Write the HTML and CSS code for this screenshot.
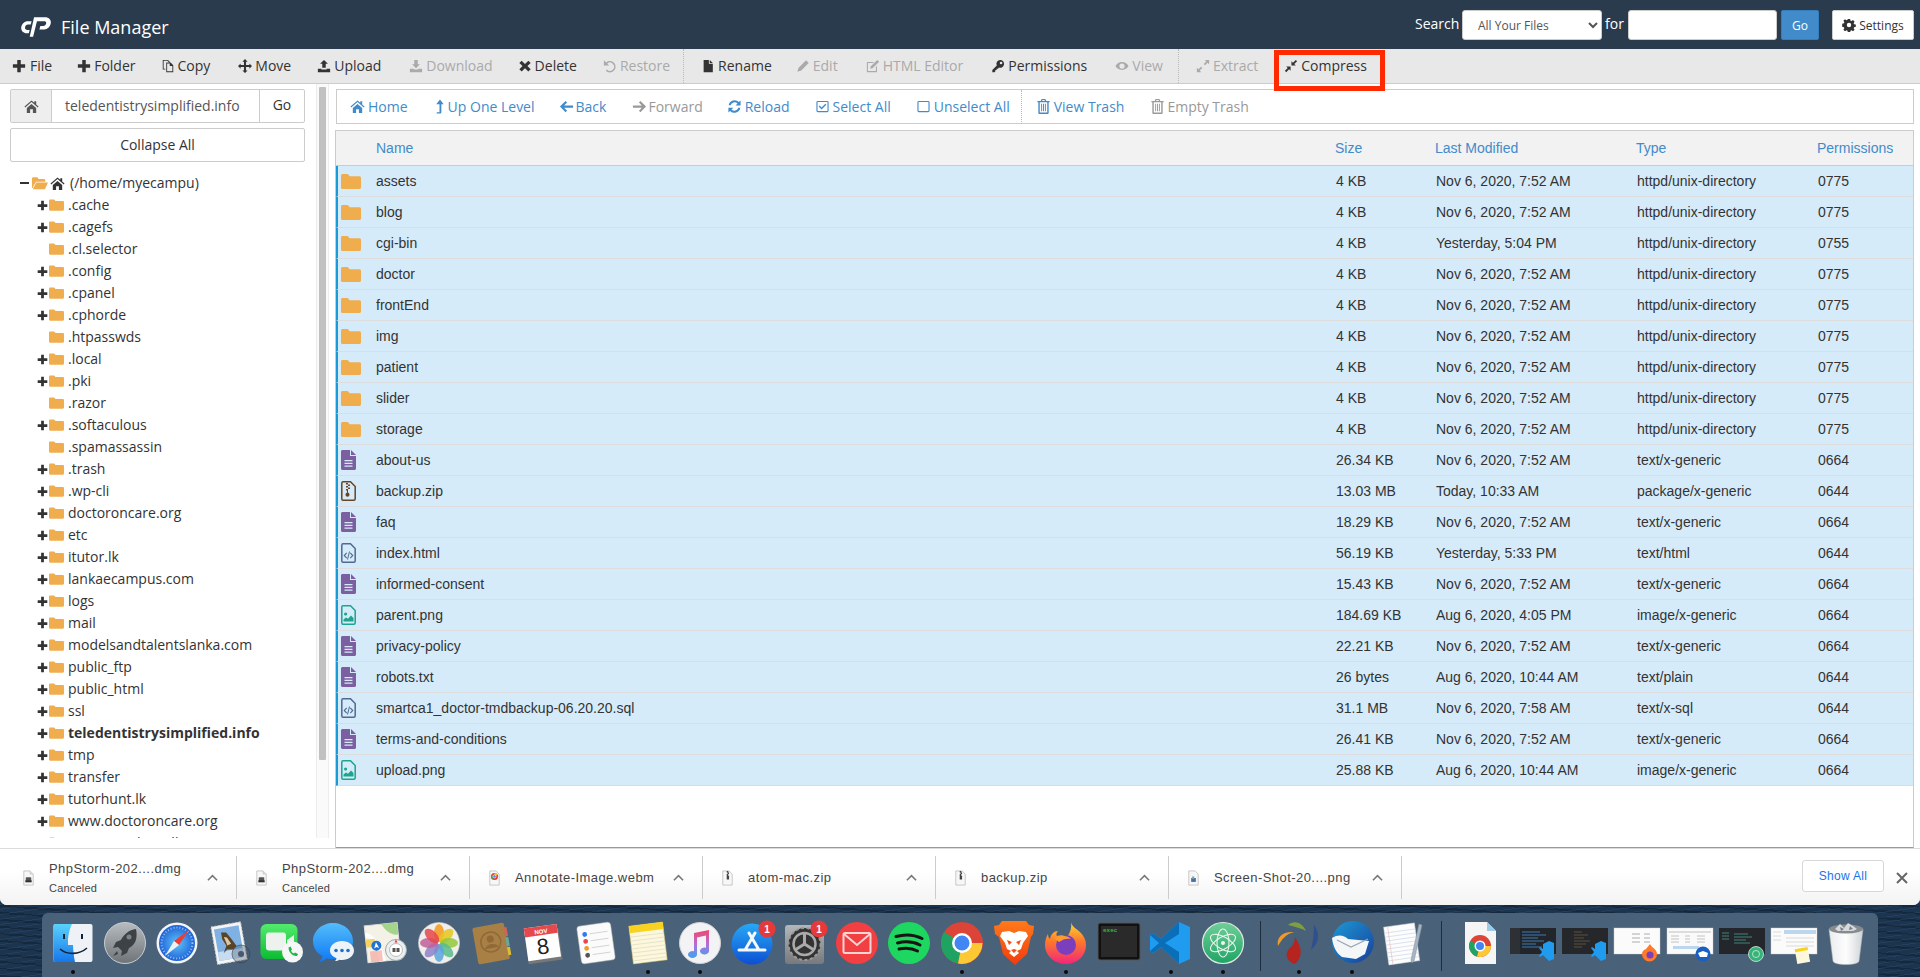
FILE: index.html
```html
<!DOCTYPE html>
<html lang="en">
<head>
<meta charset="utf-8">
<title>File Manager</title>
<link rel="stylesheet" href="styles.css">
</head>
<body>
<svg class="sprite" aria-hidden="true">
  <symbol id="i-plus" viewBox="0 0 16 16"><path d="M6 1h4v5h5v4h-5v5H6v-5H1V6h5z"/></symbol>
  <symbol id="i-copy" viewBox="0 0 16 16"><path fill-rule="evenodd" d="M2 1h6l2 2v1H9V3.6L7.5 2H3v9h2v1H2zM6 4h5l3 3v8H6zM7 5v9h6V8h-3V5z"/></symbol>
  <symbol id="i-move" viewBox="0 0 16 16"><path d="M8 0l3 3H9.2v3.8H13V5l3 3-3 3V9.2H9.2V13H11l-3 3-3-3h1.8V9.2H3V11L0 8l3-3v1.8h3.8V3H5z"/></symbol>
  <symbol id="i-upload" viewBox="0 0 16 16"><path d="M8 1l4.5 4.5H10V10H6V5.5H3.5zM1 11h4v1h6v-1h4v4H1z"/></symbol>
  <symbol id="i-download" viewBox="0 0 16 16"><path d="M6 1h4v5h2.5L8 10.5 3.5 6H6zM1 11h4l1 1h4l1-1h4v4H1z"/></symbol>
  <symbol id="i-x" viewBox="0 0 16 16"><path d="M4.2 2L8 5.6 11.8 2 14.5 4.6 10.8 8l3.7 3.6-2.7 2.6L8 10.6l-3.8 3.6-2.700-2.600L5.2 8 1.500 4.600z"/></symbol>
  <symbol id="i-undo" viewBox="0 0 16 16"><path d="M1 1.500v6h6L4.800 5.300A4.700 4.700 0 1 1 4.500 12l-1.300 1.300A6.500 6.500 0 1 0 3.500 4z"/></symbol>
  <symbol id="i-file" viewBox="0 0 16 16"><path d="M3 1h6v4.500h4.500V15H3zM10 1l3.500 3.500H10z"/></symbol>
  <symbol id="i-pencil" viewBox="0 0 16 16"><path d="M11.500 1.500l3 3L6 13l-4.500 1.500L3 10z"/></symbol>
  <symbol id="i-pensq" viewBox="0 0 16 16"><path fill-rule="evenodd" d="M1 3.500h8L8 4.700H2.200v9.100h9.100V9l1.200-1.200V15H1z"/><path d="M12.800 1l2.200 2.200L7.500 10.700 5 11l.3-2.500z"/></symbol>
  <symbol id="i-key" viewBox="0 0 16 16"><path fill-rule="evenodd" d="M10.500 1a4.500 4.500 0 1 1-1.400 8.800L8 11H6.500v1.500H5V14l-1 1H1.500v-2.500l5.100-5.100A4.500 4.500 0 0 1 10.500 1zM11.500 3a1.500 1.500 0 1 0 0 3 1.500 1.500 0 0 0 0-3z"/></symbol>
  <symbol id="i-eye" viewBox="0 0 16 16"><path fill-rule="evenodd" d="M8 3.500c3.500 0 6.200 2.300 7.500 4.500-1.300 2.200-4 4.500-7.500 4.500S1.800 10.200.5 8C1.800 5.800 4.500 3.500 8 3.500zM8 5a3 3 0 1 0 0 6 3 3 0 0 0 0-6z"/></symbol>
  <symbol id="i-expand" viewBox="0 0 16 16"><path d="M10 1h5v5l-1.800-1.800-3 3-1.400-1.400 3-3zM6 15H1v-5l1.800 1.800 3-3 1.400 1.400-3 3z"/></symbol>
  <symbol id="i-compress" viewBox="0 0 16 16"><path d="M15 2.500L11.700 5.800 13.500 7.500H8.500V2.500l1.700 1.800L13.500 1zM1 13.500l3.300-3.300L2.500 8.500h5v5l-1.700-1.800L2.500 15z"/></symbol>
  <symbol id="i-home" viewBox="0 0 16 16"><path d="M8 1.500l3 2.600V2.500h2v3.300l2.500 2.200-.8 1L8 3.300 1.300 9l-.8-1zM3 9.500l5-4.200 5 4.200V15H9.500v-4h-3v4H3z"/></symbol>
  <symbol id="i-up" viewBox="0 0 16 16"><path d="M8.500.5l4 5H10V14c0 .8-.6 1.500-1.500 1.500H5V14h3V5.500H4.500z"/></symbol>
  <symbol id="i-left" viewBox="0 0 16 16"><path d="M7 2l1.600 1.600-3.100 3.200H15v2.400H5.500l3.100 3.200L7 14 1 8z"/></symbol>
  <symbol id="i-right" viewBox="0 0 16 16"><path d="M9 2L7.400 3.600l3.100 3.200H1v2.400h9.500l-3.100 3.200L9 14l6-6z"/></symbol>
  <symbol id="i-reload" viewBox="0 0 16 16"><path d="M14.500 1.500v5.300H9.200l2-2A4.400 4.400 0 0 0 3.900 6.700H1.800A6.400 6.400 0 0 1 12.700 3.300zM1.500 14.500V9.200h5.300l-2 2a4.400 4.400 0 0 0 7.300-1.900h2.100A6.400 6.400 0 0 1 3.300 12.700z"/></symbol>
  <symbol id="i-check" viewBox="0 0 16 16"><path fill-rule="evenodd" d="M3 2h10a1.500 1.500 0 0 1 1.500 1.500v9A1.500 1.500 0 0 1 13 14H3a1.500 1.500 0 0 1-1.500-1.500v-9A1.500 1.500 0 0 1 3 2zm0 1.200a.4.400 0 0 0-.3.300v9c0 .2.100.3.300.3h10c.2 0 .3-.1.300-.3v-9a.4.400 0 0 0-.3-.3z"/><path d="M7 11.200L3.900 8.100l1.100-1.100 2 2 4-4 1.100 1.100z"/></symbol>
  <symbol id="i-square" viewBox="0 0 16 16"><path fill-rule="evenodd" d="M3 2h10a1.500 1.500 0 0 1 1.500 1.500v9A1.500 1.500 0 0 1 13 14H3a1.500 1.500 0 0 1-1.500-1.500v-9A1.500 1.500 0 0 1 3 2zm0 1.200a.4.400 0 0 0-.3.300v9c0 .2.100.3.300.3h10c.2 0 .3-.1.300-.3v-9a.4.400 0 0 0-.3-.3z"/></symbol>
  <symbol id="i-trash" viewBox="0 0 16 16"><path fill-rule="evenodd" d="M6 0h4l1 2h3.500v1.500h-1V15a1 1 0 0 1-1 1h-9a1 1 0 0 1-1-1V3.500h-1V2H5zM7 1L6.500 2h3L9 1zM4 3.500v11h8v-11z"/><path d="M5.500 5h1v8h-1zM7.500 5h1v8h-1zM9.500 5h1v8h-1z"/></symbol>
  <symbol id="i-gear" viewBox="0 0 16 16"><path fill-rule="evenodd" d="M6.700 1h2.600l.4 2 1.200.5 1.700-1.100 1.800 1.800-1.100 1.700.5 1.200 2 .4v2.600l-2 .4-.5 1.200 1.100 1.700-1.800 1.800-1.700-1.100-1.200.5-.4 2H6.700l-.4-2-1.200-.5-1.700 1.100-1.800-1.800 1.100-1.700-.5-1.200-2-.4V6.500l2-.4.500-1.200L1.600 3.200l1.800-1.800 1.700 1.100 1.200-.5zM8 5.500a2.500 2.500 0 1 0 0 5 2.500 2.500 0 0 0 0-5z"/></symbol>
  <symbol id="i-folder" viewBox="0 0 20 15"><path d="M0 1.500C0 .7.700 0 1.500 0h5.200l2 2.200h9.800c.8 0 1.500.7 1.500 1.500v9.800c0 .8-.7 1.500-1.500 1.500h-17C.7 15 0 14.300 0 13.500z"/></symbol>
  <symbol id="i-folderopen" viewBox="0 0 18 14"><path d="M0 1.500C0 .7.700 0 1.500 0H6l1.500 2h6c.8 0 1.500.7 1.500 1.500V5H4.500L1 11V12L0 12z"/><path d="M4.800 6H18l-3.500 7.500H.8z"/></symbol>
  <symbol id="i-doc" viewBox="0 0 15 20"><path fill-rule="evenodd" d="M1.500 0H9v6h6v12.500c0 .8-.7 1.500-1.500 1.500h-12C.7 20 0 19.300 0 18.500v-17C0 .7.700 0 1.500 0zM3.500 10v1.300h8V10zM3.500 12.700V14h8v-1.300zM3.500 15.400v1.300h8v-1.300z"/><path d="M10 0l5 5h-5z"/></symbol>
  <symbol id="i-zip" viewBox="0 0 15 20"><path fill="none" stroke="currentColor" stroke-width="1.500" d="M2 .8h7.500l4.700 4.700v12.200c0 .8-.6 1.500-1.400 1.500H2c-.7 0-1.200-.7-1.200-1.500V2.300C.8 1.500 1.300.8 2 .8z"/><path d="M5 2h2v1.500H5zM7 3.500h2V5H7zM5 5h2v1.500H5zM7 6.500h2V8H7zM5 8h2v1.500H5zM7 9.500v2c1 .5 1.500 1.300 1.500 2.200a2 2 0 0 1-4 0c0-.9.500-1.700 1.500-2.200v-2z"/></symbol>
  <symbol id="i-code" viewBox="0 0 15 20"><path fill="none" stroke="currentColor" stroke-width="1.500" d="M2 .8h7.500l4.700 4.700v12.200c0 .8-.6 1.500-1.400 1.500H2c-.7 0-1.200-.7-1.200-1.500V2.300C.8 1.500 1.300.8 2 .8z"/><path d="M5.300 9.500l.8.800-2 2.200 2 2.200-.8.800-2.800-3zM9.700 9.500l-.8.800 2 2.200-2 2.200.8.800 2.800-3zM8 8.500h1l-2 8H6z"/></symbol>
  <symbol id="i-image" viewBox="0 0 15 20"><path fill="none" stroke="currentColor" stroke-width="1.500" d="M2 .8h7.500l4.700 4.700v12.200c0 .8-.6 1.500-1.400 1.500H2c-.7 0-1.200-.7-1.200-1.500V2.300C.8 1.500 1.300.8 2 .8z"/><circle cx="4.600" cy="9" r="1.600"/><path d="M2.500 16.500v-2l2.500-2 2 1.300 3-3.300 2.500 2.500v3.500z"/></symbol>
  <symbol id="i-chev" viewBox="0 0 12 8"><path fill="none" stroke="currentColor" stroke-width="1.700" d="M1 6.500L6 1.500l5 5"/></symbol>
</svg>

<div class="window">
  <header class="topbar">
    <div class="brand">
      <svg class="logo" viewBox="0 0 31 20"><path d="M9 20h3.500L16.500 4H24c1.500 0 2.400 1 2 2.500-.4 1.500-1.500 2.500-3 2.500h-3l-1 3.500h5c3.500 0 6-2.500 6.700-6C31.500 3 29 0 25 0H13.500z"/><path d="M11 4H7C3.500 4 1 6.500.3 10-.3 13.500 2 16.500 6 16.500h2l1-3.500H6.500c-1.600 0-2.600-1.200-2.300-2.800C4.500 8.700 5.700 7.500 7.200 7.500H10z"/></svg>
      <span class="brand-name">File Manager</span>
    </div>
    <form class="search">
      <label class="search-label">Search</label>
      <select class="search-select"><option>All Your Files</option></select>
      <label class="search-for">for</label>
      <input class="search-input" type="text">
      <button class="btn-go" type="button">Go</button>
      <button class="btn-settings" type="button"><svg class="ic ic-s"><use href="#i-gear"/></svg>Settings</button>
    </form>
  </header>

  <nav class="toolbar">
    <span class="tool t-file"><svg class="ic"><use href="#i-plus"/></svg>File</span>
    <span class="tool t-folder"><svg class="ic"><use href="#i-plus"/></svg>Folder</span>
    <span class="tool t-copy"><svg class="ic"><use href="#i-copy"/></svg>Copy</span>
    <span class="tool t-move"><svg class="ic"><use href="#i-move"/></svg>Move</span>
    <span class="tool t-upload"><svg class="ic"><use href="#i-upload"/></svg>Upload</span>
    <span class="tool off t-download"><svg class="ic"><use href="#i-download"/></svg>Download</span>
    <span class="tool t-delete"><svg class="ic"><use href="#i-x"/></svg>Delete</span>
    <span class="tool off t-restore"><svg class="ic"><use href="#i-undo"/></svg>Restore</span>
    <span class="vsep"></span>
    <span class="tool t-rename"><svg class="ic"><use href="#i-file"/></svg>Rename</span>
    <span class="tool off t-edit"><svg class="ic"><use href="#i-pencil"/></svg>Edit</span>
    <span class="tool off t-html"><svg class="ic"><use href="#i-pensq"/></svg>HTML Editor</span>
    <span class="tool t-perm"><svg class="ic"><use href="#i-key"/></svg>Permissions</span>
    <span class="tool off t-view"><svg class="ic"><use href="#i-eye"/></svg>View</span>
    <span class="vsep"></span>
    <span class="tool off t-extract"><svg class="ic"><use href="#i-expand"/></svg>Extract</span>
    <span class="tool compress"><svg class="ic"><use href="#i-compress"/></svg>Compress</span>
  </nav>

  <main class="main">
    <aside class="side">
      <div class="side-body">
        <div class="pathbar">
          <span class="path-home"><svg class="ic-home"><use href="#i-home"/></svg></span>
          <span class="path-input">teledentistrysimplified.info</span>
          <span class="path-go">Go</span>
        </div>
        <div class="collapse">Collapse All</div>
        <ul class="tree">
          <li class="node root"><span class="minus"></span><svg class="f-open"><use href="#i-folderopen"/></svg><svg class="root-home"><use href="#i-home"/></svg>(/home/myecampu)</li>
          <li class="node"><svg class="tg"><use href="#i-plus"/></svg><svg class="f"><use href="#i-folder"/></svg>.cache</li>
          <li class="node"><svg class="tg"><use href="#i-plus"/></svg><svg class="f"><use href="#i-folder"/></svg>.cagefs</li>
          <li class="node leaf"><svg class="f"><use href="#i-folder"/></svg>.cl.selector</li>
          <li class="node"><svg class="tg"><use href="#i-plus"/></svg><svg class="f"><use href="#i-folder"/></svg>.config</li>
          <li class="node"><svg class="tg"><use href="#i-plus"/></svg><svg class="f"><use href="#i-folder"/></svg>.cpanel</li>
          <li class="node"><svg class="tg"><use href="#i-plus"/></svg><svg class="f"><use href="#i-folder"/></svg>.cphorde</li>
          <li class="node leaf"><svg class="f"><use href="#i-folder"/></svg>.htpasswds</li>
          <li class="node"><svg class="tg"><use href="#i-plus"/></svg><svg class="f"><use href="#i-folder"/></svg>.local</li>
          <li class="node"><svg class="tg"><use href="#i-plus"/></svg><svg class="f"><use href="#i-folder"/></svg>.pki</li>
          <li class="node leaf"><svg class="f"><use href="#i-folder"/></svg>.razor</li>
          <li class="node"><svg class="tg"><use href="#i-plus"/></svg><svg class="f"><use href="#i-folder"/></svg>.softaculous</li>
          <li class="node leaf"><svg class="f"><use href="#i-folder"/></svg>.spamassassin</li>
          <li class="node"><svg class="tg"><use href="#i-plus"/></svg><svg class="f"><use href="#i-folder"/></svg>.trash</li>
          <li class="node"><svg class="tg"><use href="#i-plus"/></svg><svg class="f"><use href="#i-folder"/></svg>.wp-cli</li>
          <li class="node"><svg class="tg"><use href="#i-plus"/></svg><svg class="f"><use href="#i-folder"/></svg>doctoroncare.org</li>
          <li class="node"><svg class="tg"><use href="#i-plus"/></svg><svg class="f"><use href="#i-folder"/></svg>etc</li>
          <li class="node"><svg class="tg"><use href="#i-plus"/></svg><svg class="f"><use href="#i-folder"/></svg>itutor.lk</li>
          <li class="node"><svg class="tg"><use href="#i-plus"/></svg><svg class="f"><use href="#i-folder"/></svg>lankaecampus.com</li>
          <li class="node"><svg class="tg"><use href="#i-plus"/></svg><svg class="f"><use href="#i-folder"/></svg>logs</li>
          <li class="node"><svg class="tg"><use href="#i-plus"/></svg><svg class="f"><use href="#i-folder"/></svg>mail</li>
          <li class="node"><svg class="tg"><use href="#i-plus"/></svg><svg class="f"><use href="#i-folder"/></svg>modelsandtalentslanka.com</li>
          <li class="node"><svg class="tg"><use href="#i-plus"/></svg><svg class="f"><use href="#i-folder"/></svg>public_ftp</li>
          <li class="node"><svg class="tg"><use href="#i-plus"/></svg><svg class="f"><use href="#i-folder"/></svg>public_html</li>
          <li class="node"><svg class="tg"><use href="#i-plus"/></svg><svg class="f"><use href="#i-folder"/></svg>ssl</li>
          <li class="node current"><svg class="tg"><use href="#i-plus"/></svg><svg class="f"><use href="#i-folder"/></svg>teledentistrysimplified.info</li>
          <li class="node"><svg class="tg"><use href="#i-plus"/></svg><svg class="f"><use href="#i-folder"/></svg>tmp</li>
          <li class="node"><svg class="tg"><use href="#i-plus"/></svg><svg class="f"><use href="#i-folder"/></svg>transfer</li>
          <li class="node"><svg class="tg"><use href="#i-plus"/></svg><svg class="f"><use href="#i-folder"/></svg>tutorhunt.lk</li>
          <li class="node"><svg class="tg"><use href="#i-plus"/></svg><svg class="f"><use href="#i-folder"/></svg>www.doctoroncare.org</li>
          <li class="node"><svg class="tg"><use href="#i-plus"/></svg><svg class="f"><use href="#i-folder"/></svg>www.tutorhunt.lk</li>
        </ul>
      </div>
      <div class="scrollbar"><div class="thumb"></div></div>
    </aside>

    <section class="content">
      <div class="actions">
        <span class="act a-home"><svg class="ic"><use href="#i-home"/></svg>Home</span>
        <span class="act a-up"><svg class="ic"><use href="#i-up"/></svg>Up One Level</span>
        <span class="act a-back"><svg class="ic"><use href="#i-left"/></svg>Back</span>
        <span class="act off a-forward"><svg class="ic"><use href="#i-right"/></svg>Forward</span>
        <span class="act a-reload"><svg class="ic"><use href="#i-reload"/></svg>Reload</span>
        <span class="act a-select"><svg class="ic"><use href="#i-check"/></svg>Select All</span>
        <span class="act a-unselect"><svg class="ic"><use href="#i-square"/></svg>Unselect All</span>
        <span class="vsep vsep-act"></span>
        <span class="act a-trash"><svg class="ic"><use href="#i-trash"/></svg>View Trash</span>
        <span class="act off a-empty"><svg class="ic"><use href="#i-trash"/></svg>Empty Trash</span>
      </div>
      <div class="listing">
        <table class="files">
          <colgroup><col class="c-icon"><col class="c-name"><col class="c-size"><col class="c-mod"><col class="c-type"><col class="c-perm"></colgroup>
          <thead><tr><th></th><th>Name</th><th>Size</th><th>Last Modified</th><th>Type</th><th>Permissions</th></tr></thead>
          <tbody>
            <tr><td class="cell-ic"><svg class="k-folder"><use href="#i-folder"/></svg></td><td>assets</td><td>4 KB</td><td>Nov 6, 2020, 7:52 AM</td><td>httpd/unix-directory</td><td>0775</td></tr>
            <tr><td class="cell-ic"><svg class="k-folder"><use href="#i-folder"/></svg></td><td>blog</td><td>4 KB</td><td>Nov 6, 2020, 7:52 AM</td><td>httpd/unix-directory</td><td>0775</td></tr>
            <tr><td class="cell-ic"><svg class="k-folder"><use href="#i-folder"/></svg></td><td>cgi-bin</td><td>4 KB</td><td>Yesterday, 5:04 PM</td><td>httpd/unix-directory</td><td>0755</td></tr>
            <tr><td class="cell-ic"><svg class="k-folder"><use href="#i-folder"/></svg></td><td>doctor</td><td>4 KB</td><td>Nov 6, 2020, 7:52 AM</td><td>httpd/unix-directory</td><td>0775</td></tr>
            <tr><td class="cell-ic"><svg class="k-folder"><use href="#i-folder"/></svg></td><td>frontEnd</td><td>4 KB</td><td>Nov 6, 2020, 7:52 AM</td><td>httpd/unix-directory</td><td>0775</td></tr>
            <tr><td class="cell-ic"><svg class="k-folder"><use href="#i-folder"/></svg></td><td>img</td><td>4 KB</td><td>Nov 6, 2020, 7:52 AM</td><td>httpd/unix-directory</td><td>0775</td></tr>
            <tr><td class="cell-ic"><svg class="k-folder"><use href="#i-folder"/></svg></td><td>patient</td><td>4 KB</td><td>Nov 6, 2020, 7:52 AM</td><td>httpd/unix-directory</td><td>0775</td></tr>
            <tr><td class="cell-ic"><svg class="k-folder"><use href="#i-folder"/></svg></td><td>slider</td><td>4 KB</td><td>Nov 6, 2020, 7:52 AM</td><td>httpd/unix-directory</td><td>0775</td></tr>
            <tr><td class="cell-ic"><svg class="k-folder"><use href="#i-folder"/></svg></td><td>storage</td><td>4 KB</td><td>Nov 6, 2020, 7:52 AM</td><td>httpd/unix-directory</td><td>0775</td></tr>
            <tr><td class="cell-ic"><svg class="k-doc"><use href="#i-doc"/></svg></td><td>about-us</td><td>26.34 KB</td><td>Nov 6, 2020, 7:52 AM</td><td>text/x-generic</td><td>0664</td></tr>
            <tr><td class="cell-ic"><svg class="k-zip"><use href="#i-zip"/></svg></td><td>backup.zip</td><td>13.03 MB</td><td>Today, 10:33 AM</td><td>package/x-generic</td><td>0644</td></tr>
            <tr><td class="cell-ic"><svg class="k-doc"><use href="#i-doc"/></svg></td><td>faq</td><td>18.29 KB</td><td>Nov 6, 2020, 7:52 AM</td><td>text/x-generic</td><td>0664</td></tr>
            <tr><td class="cell-ic"><svg class="k-code"><use href="#i-code"/></svg></td><td>index.html</td><td>56.19 KB</td><td>Yesterday, 5:33 PM</td><td>text/html</td><td>0644</td></tr>
            <tr><td class="cell-ic"><svg class="k-doc"><use href="#i-doc"/></svg></td><td>informed-consent</td><td>15.43 KB</td><td>Nov 6, 2020, 7:52 AM</td><td>text/x-generic</td><td>0664</td></tr>
            <tr><td class="cell-ic"><svg class="k-image"><use href="#i-image"/></svg></td><td>parent.png</td><td>184.69 KB</td><td>Aug 6, 2020, 4:05 PM</td><td>image/x-generic</td><td>0664</td></tr>
            <tr><td class="cell-ic"><svg class="k-doc"><use href="#i-doc"/></svg></td><td>privacy-policy</td><td>22.21 KB</td><td>Nov 6, 2020, 7:52 AM</td><td>text/x-generic</td><td>0664</td></tr>
            <tr><td class="cell-ic"><svg class="k-doc"><use href="#i-doc"/></svg></td><td>robots.txt</td><td>26 bytes</td><td>Aug 6, 2020, 10:44 AM</td><td>text/plain</td><td>0644</td></tr>
            <tr><td class="cell-ic"><svg class="k-code"><use href="#i-code"/></svg></td><td>smartca1_doctor-tmdbackup-06.20.20.sql</td><td>31.1 MB</td><td>Nov 6, 2020, 7:58 AM</td><td>text/x-sql</td><td>0644</td></tr>
            <tr><td class="cell-ic"><svg class="k-doc"><use href="#i-doc"/></svg></td><td>terms-and-conditions</td><td>26.41 KB</td><td>Nov 6, 2020, 7:52 AM</td><td>text/x-generic</td><td>0664</td></tr>
            <tr><td class="cell-ic"><svg class="k-image"><use href="#i-image"/></svg></td><td>upload.png</td><td>25.88 KB</td><td>Aug 6, 2020, 10:44 AM</td><td>image/x-generic</td><td>0664</td></tr>
          </tbody>
        </table>
      </div>
    </section>
  </main>

  <footer class="downloads">
    <div class="dl-item">
      <svg class="dl-ic" viewBox="0 0 14 20"><path class="pg" d="M1 1h8l4 4v14H1z"/><path d="M9 1v4h4" class="pgf"/><rect x="3.500" y="9" width="7" height="6" rx="1" fill="#555"/><rect x="3" y="13" width="8" height="2.500" fill="#333"/></svg>
      <div class="dl-text"><div class="dl-name">PhpStorm-202....dmg</div><div class="dl-sub">Canceled</div></div>
      <svg class="dl-chev"><use href="#i-chev"/></svg>
    </div>
    <div class="dl-item">
      <svg class="dl-ic" viewBox="0 0 14 20"><path class="pg" d="M1 1h8l4 4v14H1z"/><path d="M9 1v4h4" class="pgf"/><rect x="3.500" y="9" width="7" height="6" rx="1" fill="#555"/><rect x="3" y="13" width="8" height="2.500" fill="#333"/></svg>
      <div class="dl-text"><div class="dl-name">PhpStorm-202....dmg</div><div class="dl-sub">Canceled</div></div>
      <svg class="dl-chev"><use href="#i-chev"/></svg>
    </div>
    <div class="dl-item">
      <svg class="dl-ic" viewBox="0 0 14 20"><path class="pg" d="M1 1h8l4 4v14H1z"/><circle cx="7" cy="8" r="4.500" fill="#e33"/><path d="M7 8V3.500a4.500 4.500 0 0 1 4 2.500z" fill="#fbc02d"/><path d="M7 8l-3 3.400a4.500 4.500 0 0 1-.5-6z" fill="#34a853"/><circle cx="7" cy="8" r="2" fill="#4285f4" stroke="#fff" stroke-width=".8"/></svg>
      <div class="dl-text"><div class="dl-name">Annotate-Image.webm</div></div>
      <svg class="dl-chev"><use href="#i-chev"/></svg>
    </div>
    <div class="dl-item">
      <svg class="dl-ic" viewBox="0 0 14 20"><path class="pg" d="M1 1h8l4 4v14H1z"/><path d="M6 1h2v2H6zM7 3h2v2H7zM6 5h2v2H6zM6 7h3v5H6z" fill="#444"/></svg>
      <div class="dl-text"><div class="dl-name">atom-mac.zip</div></div>
      <svg class="dl-chev"><use href="#i-chev"/></svg>
    </div>
    <div class="dl-item">
      <svg class="dl-ic" viewBox="0 0 14 20"><path class="pg" d="M1 1h8l4 4v14H1z"/><path d="M6 1h2v2H6zM7 3h2v2H7zM6 5h2v2H6zM6 7h3v5H6z" fill="#444"/></svg>
      <div class="dl-text"><div class="dl-name">backup.zip</div></div>
      <svg class="dl-chev"><use href="#i-chev"/></svg>
    </div>
    <div class="dl-item">
      <svg class="dl-ic" viewBox="0 0 14 20"><path class="pg" d="M1 1h8l4 4v14H1z"/><rect x="4" y="10" width="6" height="5" fill="#4a6fa5"/><rect x="5" y="8" width="3" height="3" fill="#8aa"/></svg>
      <div class="dl-text"><div class="dl-name">Screen-Shot-20....png</div></div>
      <svg class="dl-chev"><use href="#i-chev"/></svg>
    </div>
    <div class="dl-spacer"></div>
    <button class="show-all" type="button">Show All</button>
    <svg class="dl-close" viewBox="0 0 12 12"><path d="M1 1l10 10M11 1L1 11"/></svg>
  </footer>
</div>

<div class="dock">
  <div class="dk run"><svg viewBox="0 0 46 46"><defs><linearGradient id="fa" x1="0" y1="0" x2="0" y2="1"><stop offset="0" stop-color="#5ad2fb"/><stop offset="1" stop-color="#1676ea"/></linearGradient></defs><rect x="3.500" y="4" width="39" height="38" rx="2" fill="#eef2f6"/><path d="M5.500 4H22c-3 6-4.500 14-4 21h5c.2 6 .8 11 2 17H5.500a2 2 0 0 1-2-2V6a2 2 0 0 1 2-2z" fill="url(#fa)"/><rect x="13" y="14" width="2" height="5" fill="#123"/><rect x="31" y="14" width="2" height="5" fill="#123"/><path d="M10 29c7 6 19 6 27-1" fill="none" stroke="#123" stroke-width="1.600"/></svg></div>
  <div class="dk"><svg viewBox="0 0 46 46"><defs><linearGradient id="la" x1="0" y1="0" x2="0" y2="1"><stop offset="0" stop-color="#b6bcc0"/><stop offset="1" stop-color="#6e7378"/></linearGradient></defs><circle cx="23" cy="23" r="20.500" fill="url(#la)" stroke="#c9cdd0" stroke-width="1"/><path d="M34 9c-7 1-12 5-15 11l-5 2-3 6 5-1 4 4-1 5 6-3 2-5c6-3 9-9 7-19z" fill="#3d4247"/><path d="M15 31l-4 5 5-2z" fill="#3d4247"/><circle cx="27" cy="17" r="2.500" fill="#7d8388"/></svg></div>
  <div class="dk"><svg viewBox="0 0 46 46"><defs><radialGradient id="sa"><stop offset="0" stop-color="#5fc4f8"/><stop offset="1" stop-color="#1d62d8"/></radialGradient></defs><circle cx="23" cy="23" r="20.500" fill="#f2f4f6"/><circle cx="23" cy="23" r="18" fill="url(#sa)"/><circle cx="23" cy="23" r="15.500" fill="none" stroke="#fff" stroke-opacity=".55" stroke-width="2" stroke-dasharray="1 2"/><path d="M35 10L20 21l5 4z" fill="#f03a35"/><path d="M11 36l14-11-5-4z" fill="#eef1f3"/></svg></div>
  <div class="dk"><svg viewBox="0 0 46 46"><g transform="rotate(-10 23 23)"><rect x="7" y="4" width="30" height="38" fill="#f5f5f5" stroke="#ccc" stroke-dasharray="2 1.500"/><rect x="9.500" y="7" width="25" height="32" fill="#7fb2e3"/><path d="M9.500 30h25v9h-25z" fill="#c7dcf0"/><path d="M16 11l5 1 4 7 4 8-4 3-6-1-4 3 4-7-3-7z" fill="#5a4326"/><path d="M18 16l3 1 3 7-4 1z" fill="#d9c9a8"/></g><circle cx="34" cy="34" r="9" fill="#456" fill-opacity=".35" stroke="#345" stroke-opacity=".6"/><circle cx="34" cy="34" r="3" fill="#23344f" fill-opacity=".7"/></svg></div>
  <div class="dk"><svg viewBox="0 0 46 46"><defs><linearGradient id="ft" x1="0" y1="0" x2="0" y2="1"><stop offset="0" stop-color="#52ec6c"/><stop offset="1" stop-color="#0dbb32"/></linearGradient></defs><rect x="1.500" y="4" width="37" height="35" rx="6" fill="url(#ft)"/><rect x="7" y="12.500" width="20" height="18" rx="3" fill="#eef2ef"/><path d="M28 20l7-5v17l-7-5z" fill="#eef2ef"/><circle cx="33.500" cy="32" r="10.500" fill="#f5f6f5"/><path d="M29.500 27.500l2-1 1.500 3-1 1c.5 1.500 1.500 2.500 3 3l1-1 3 1.500-1 2c-4.500.5-8.500-4-8.500-8.500z" fill="#19b845"/></svg></div>
  <div class="dk"><svg viewBox="0 0 46 46"><defs><linearGradient id="ms" x1="0" y1="0" x2="0" y2="1"><stop offset="0" stop-color="#53bdfb"/><stop offset="1" stop-color="#1079f5"/></linearGradient></defs><path d="M22 3c11 0 20 8 20 18 0 10-9 18-20 18-2 0-4 0-6-.8-2 2-5 3-8 3.300 2-1.500 3-3.500 3.500-5.500C5.500 33 2 27.500 2 21 2 11 11 3 22 3z" fill="url(#ms)"/><path d="M31 21c6.500 0 12 4 12 9.500S37.500 40 31 40c-1 0-2 0-3-.3-1 1-2 1.300-4 1.300 1-1 1.500-2 1.500-2.800C21.500 36.500 19 34 19 30.500 19 25 24.500 21 31 21z" fill="#eef3f8"/><circle cx="25" cy="30.500" r="1.800" fill="#1a6fd0"/><circle cx="31" cy="30.500" r="1.800" fill="#1a6fd0"/><circle cx="37" cy="30.500" r="1.800" fill="#1a6fd0"/></svg></div>
  <div class="dk"><svg viewBox="0 0 46 46"><g transform="rotate(-6 20 22)"><rect x="3" y="4" width="33" height="37" fill="#f4f1e6" stroke="#ddd"/><path d="M20 4h16v12c-6 1-12-4-16-12z" fill="#a5d58a"/><path d="M3 16c6 0 9 3 12 25h6C18 25 12 13 3 11z" fill="#fff"/><path d="M3 18h9v8H3z" fill="#f6d365"/><path d="M6 30h12v11H6z" fill="#f4a8a0" fill-opacity=".7"/><circle cx="13" cy="25" r="5" fill="#1e74d4"/><path d="M13 21.500l2.500 6-2.500-1.300-2.500 1.300z" fill="#fff"/></g><circle cx="33" cy="30" r="10.500" fill="#eceff1" stroke="#9aa"/><circle cx="33" cy="30" r="6.500" fill="#fff" stroke="#bbb"/><path d="M33 19.500l1.500 3h-3z" fill="#e33"/><path d="M29.500 28h3v4h-3zM33.500 28h3v4h-3z" fill="#555"/></svg></div>
  <div class="dk"><svg viewBox="0 0 46 46"><circle cx="23" cy="23" r="20.500" fill="#f1efec" stroke="#ccc" stroke-width=".6"/><g fill-opacity=".86"><ellipse cx="23" cy="13" rx="5" ry="9" fill="#f69a1b"/><ellipse cx="23" cy="13" rx="5" ry="9" fill="#e8c61d" transform="rotate(45 23 23)"/><ellipse cx="23" cy="13" rx="5" ry="9" fill="#93c83e" transform="rotate(90 23 23)"/><ellipse cx="23" cy="13" rx="5" ry="9" fill="#59bb8c" transform="rotate(135 23 23)"/><ellipse cx="23" cy="13" rx="5" ry="9" fill="#5aa5dd" transform="rotate(180 23 23)"/><ellipse cx="23" cy="13" rx="5" ry="9" fill="#8f82c7" transform="rotate(225 23 23)"/><ellipse cx="23" cy="13" rx="5" ry="9" fill="#c05f9a" transform="rotate(270 23 23)"/><ellipse cx="23" cy="13" rx="5" ry="9" fill="#e5484d" transform="rotate(315 23 23)"/></g></svg></div>
  <div class="dk"><svg viewBox="0 0 46 46"><g transform="rotate(-10 23 23)"><rect x="7" y="5" width="32" height="37" rx="2" fill="#a87f45"/><rect x="38" y="10" width="3" height="9" fill="#c65"/><rect x="38" y="20" width="3" height="9" fill="#6a9"/><rect x="38" y="30" width="3" height="8" fill="#db3"/><circle cx="23" cy="22" r="10" fill="none" stroke="#8f6a37" stroke-width="1.500"/><circle cx="23" cy="19" r="3.500" fill="#8f6a37"/><path d="M16 28c2-5 12-5 14 0z" fill="#8f6a37"/></g></svg></div>
  <div class="dk"><svg viewBox="0 0 46 46"><g transform="rotate(-8 23 23)"><rect x="6" y="10" width="34" height="32" fill="#777"/><rect x="6" y="6" width="33" height="33" fill="#fff"/><path d="M6 6h33v9H6z" fill="#e5484d"/><text x="22.500" y="13.500" class="cal-m">NOV</text><text x="22.500" y="34" class="cal-d">8</text></g></svg></div>
  <div class="dk"><svg viewBox="0 0 46 46"><g transform="rotate(-8 23 23)"><rect x="6" y="4" width="34" height="38" rx="3" fill="#fbfbfb" stroke="#bbb" stroke-width=".5"/><circle cx="13" cy="13" r="2.400" fill="#3478f6"/><circle cx="13" cy="20" r="2.400" fill="#e5484d"/><circle cx="13" cy="27" r="2.400" fill="#ee9a2c"/><circle cx="13" cy="34" r="2.400" fill="#555"/><path d="M18 13h18M18 20h18M18 27h18M18 34h18" stroke="#ccc" stroke-width=".8"/></g></svg></div>
  <div class="dk run"><svg viewBox="0 0 46 46"><g transform="rotate(-7 23 23)"><rect x="6" y="4" width="34" height="38" fill="#fdf8dc" stroke="#d9c873" stroke-width=".5"/><rect x="6" y="4" width="34" height="7" fill="#f9d11f"/><path d="M6 15h34M6 19h34M6 23h34M6 27h34M6 31h34M6 35h34M6 39h34" stroke="#d8d5c3" stroke-width=".6"/></g></svg></div>
  <div class="dk run"><svg viewBox="0 0 46 46"><defs><linearGradient id="mu" x1="0" y1="0" x2="0" y2="1"><stop offset="0" stop-color="#f0476a"/><stop offset=".5" stop-color="#b86bd8"/><stop offset="1" stop-color="#3ba6ef"/></linearGradient></defs><circle cx="23" cy="23" r="20.500" fill="#f3f3f5" stroke="#d3d3d6"/><path d="M17 13l15-3v21a4.500 3.500 0 1 1-3-3.300V15.500l-9 2v17a4.500 3.500 0 1 1-3-3.300z" fill="url(#mu)"/></svg></div>
  <div class="dk"><svg viewBox="0 0 46 46"><defs><linearGradient id="as" x1="0" y1="0" x2="0" y2="1"><stop offset="0" stop-color="#27a9f5"/><stop offset="1" stop-color="#0d4fd4"/></linearGradient></defs><circle cx="22" cy="24" r="20.500" fill="url(#as)"/><path d="M9 30h26M15 30l10-17M29 30L19 13" stroke="#f4f7fb" stroke-width="3" stroke-linecap="round" fill="none"/><circle cx="37" cy="9" r="8.500" fill="#e5393a"/><text x="37" y="12.500" class="badge">1</text></svg></div>
  <div class="dk"><svg viewBox="0 0 46 46"><defs><linearGradient id="sp" x1="0" y1="0" x2="0" y2="1"><stop offset="0" stop-color="#b4b7ba"/><stop offset="1" stop-color="#77797c"/></linearGradient></defs><rect x="3" y="5" width="39" height="39" rx="3" fill="url(#sp)"/><circle cx="22.500" cy="24" r="16" fill="#333" /><circle cx="22.500" cy="24" r="16" fill="none" stroke="#999" stroke-width="2" stroke-dasharray="3 2.500"/><circle cx="22.500" cy="24" r="11" fill="none" stroke="#aaa" stroke-width="2.500"/><path d="M22.500 24V13M22.500 24l-9.500 6M22.500 24l9.500 6" stroke="#aaa" stroke-width="3"/><circle cx="37" cy="9" r="8.500" fill="#e5393a"/><text x="37" y="12.500" class="badge">1</text></svg></div>
  <div class="dk"><svg viewBox="0 0 46 46"><circle cx="23" cy="23" r="21" fill="#f23f42"/><rect x="9.500" y="13" width="27" height="20" rx="1.500" fill="none" stroke="#f7d5d5" stroke-width="2"/><path d="M10 14l13 11 13-11" fill="none" stroke="#f7d5d5" stroke-width="2"/></svg></div>
  <div class="dk"><svg viewBox="0 0 46 46"><circle cx="23" cy="23" r="21" fill="#1ed760"/><path d="M10 16.500c9-2.500 18-2 26 2M11.500 23c8-2 15.500-1.500 22.500 2M13 29c6.500-1.500 13-1 18.500 2" fill="none" stroke="#191414" stroke-width="3" stroke-linecap="round"/></svg></div>
  <div class="dk run"><svg viewBox="0 0 46 46"><circle cx="23" cy="23" r="21" fill="#db4437"/><path d="M23 23L5 12A21 21 0 0 0 19 43.600z" fill="#1ea362"/><path d="M23 23h20.500A21 21 0 0 1 19 43.600z" fill="#fcc934"/><circle cx="23" cy="23" r="10" fill="#fff"/><circle cx="23" cy="23" r="7.500" fill="#4285f4"/></svg></div>
  <div class="dk"><svg viewBox="0 0 46 46"><defs><linearGradient id="br" x1="0" y1="0" x2="0" y2="1"><stop offset="0" stop-color="#ff7a1a"/><stop offset="1" stop-color="#f33b0e"/></linearGradient></defs><path d="M11 1h24l3 4 5 1-1 8-2 3-4 17-12 11-12-11L8 17l-4-3-1-8 5-1z" fill="url(#br)"/><path d="M11 12l7-1 5 2 5-2 7 1 2 4-5 7-2 6-4 2 2 2-5 4-5-4 2-2-4-2-2-6-5-7z" fill="#fff"/><path d="M16 20l5 2-3 3zM30 20l-5 2 3 3zM20 30l3-1 3 1-3 3z" fill="#f4500f"/></svg></div>
  <div class="dk run"><svg viewBox="0 0 46 46"><defs><linearGradient id="fx" x1="0" y1="0" x2="0" y2="1"><stop offset="0" stop-color="#ffd93a"/><stop offset=".45" stop-color="#ff7a2a"/><stop offset="1" stop-color="#f2267a"/></linearGradient></defs><path d="M28 2c1 5 5 6 9 10 4 4 6 8 6 13 0 11-9 19-20 19S2 36 2 25c0-4 1-8 3-11 0 3 1 4 2 5 1-5 4-8 8-8-2 2-2 4-1 5 3-1 7-1 10 1 3-4 5-9 4-15z" fill="url(#fx)"/><circle cx="23" cy="25" r="10" fill="#7b3fbd"/><path d="M11 18c5-3 13-3 17 1-4-1-8 0-12 3z" fill="#ff9a2e"/></svg></div>
  <div class="dk"><svg viewBox="0 0 46 46"><rect x="2" y="3" width="42" height="37" rx="2" fill="#111" stroke="#555"/><rect x="5" y="6" width="36" height="31" fill="#2a2a2a"/><text x="7" y="12" class="exec">exec</text></svg></div>
  <div class="dk run"><svg viewBox="0 0 46 46"><path d="M31 2l11 5v32l-11 5-18-17-8 6-3-2v-16l3-2 8 6z" fill="#1f9cf0"/><path d="M31 2L13 19 5 13l-3 2 9 8-9 8 3 2 8-6 18 17V32L17 23 31 14z" fill="#0a6fb8"/></svg></div>
  <div class="dk run"><svg viewBox="0 0 46 46"><defs><linearGradient id="at" x1="0" y1="0" x2="0" y2="1"><stop offset="0" stop-color="#6fcf97"/><stop offset="1" stop-color="#1fa465"/></linearGradient></defs><circle cx="23" cy="23" r="20.500" fill="url(#at)" stroke="#dfe9e3" stroke-width="1.200"/><g fill="none" stroke="#eef6f0" stroke-width="1.100"><ellipse cx="23" cy="23" rx="14" ry="6" transform="rotate(30 23 23)"/><ellipse cx="23" cy="23" rx="14" ry="6" transform="rotate(90 23 23)"/><ellipse cx="23" cy="23" rx="14" ry="6" transform="rotate(150 23 23)"/></g><circle cx="23" cy="23" r="2" fill="#eef6f0"/></svg></div>
  <span class="dk-sep"></span>
  <div class="dk run"><svg viewBox="0 0 46 46"><path d="M12 5c6-5 14-3 18 6-5-3-11-4-18-6z" fill="#7e9e3f"/><path d="M2 26C0 17 7 11 18 12c-8 2-12 7-16 14z" fill="#ee9a2c"/><path d="M38 5c6 8 6 17-3 25 2-9 3-16 3-25z" fill="#2f4f8f"/><path d="M19 17c5 8 10 18 0 27-8-2-11-10-6-15 4-3 6-7 6-12z" fill="#b5241f"/></svg></div>
  <div class="dk run"><svg viewBox="0 0 46 46"><defs><linearGradient id="tb" x1="0" y1="0" x2="1" y2="1"><stop offset="0" stop-color="#1a9ad6"/><stop offset="1" stop-color="#1b3f99"/></linearGradient></defs><circle cx="24" cy="22" r="21" fill="url(#tb)"/><path d="M3 18c6-4 12-3 16 1l21 2-4 13-9 5-14-2C7 33 4 26 3 18z" fill="#f4f6f8"/><path d="M8 20l14 7 17-8" fill="none" stroke="#9aa7b5" stroke-width="1.200"/></svg></div>
  <div class="dk"><svg viewBox="0 0 46 46"><g transform="rotate(-8 20 23)"><rect x="5" y="5" width="31" height="38" fill="#fdfdfd" stroke="#ddd" stroke-width=".5"/><path d="M5 11h31M5 15h31M5 19h31M5 23h31M5 27h31M5 31h31M5 35h31M5 39h31" stroke="#c5d3e6" stroke-width=".6"/><path d="M9 5v38" stroke="#f0b7b7" stroke-width=".6"/></g><path d="M38 4l3 1-8 36-2 2-1-3z" fill="#a7b5c2" stroke="#7f8c99" stroke-width=".5"/></svg></div>
  <span class="dk-sep"></span>
  <div class="dk"><svg viewBox="0 0 46 46"><path d="M8 2h22l9 9v33H8z" fill="#f5f5f5"/><path d="M30 2l9 9h-9z" fill="#9ccbe8"/><circle cx="23" cy="26" r="11" fill="#db4437"/><path d="M23 26L13.500 21A11 11 0 0 0 20 36.600z" fill="#1ea362"/><path d="M23 26h11A11 11 0 0 1 20 36.600z" fill="#fcc934"/><circle cx="23" cy="26" r="5.500" fill="#fff"/><circle cx="23" cy="26" r="4" fill="#4285f4"/></svg></div>
  <div class="dk"><svg viewBox="0 0 46 46"><rect x="0" y="8" width="46" height="26" fill="#22262b"/><rect x="0" y="8" width="10" height="26" fill="#2d3136"/><path d="M12 12h18M12 15h24M12 18h16M12 21h22M12 24h14M12 27h20" stroke="#4a8fd0" stroke-width=".8"/><path d="M33 24l6-3 5 2v16l-5 2-6-6-3 2-1-1 3-4-3-4 1-1 3 2z" fill="#1f9cf0"/></svg></div>
  <div class="dk"><svg viewBox="0 0 46 46"><rect x="0" y="8" width="46" height="26" fill="#25272a"/><path d="M12 12h8M12 15h14M12 18h10M12 21h16M12 24h12M12 27h8" stroke="#6b5e45" stroke-width=".8"/><path d="M33 24l6-3 5 2v16l-5 2-6-6-3 2-1-1 3-4-3-4 1-1 3 2z" fill="#1f9cf0"/></svg></div>
  <div class="dk"><svg viewBox="0 0 46 46"><rect x="0" y="8" width="46" height="26" fill="#fbfbfb" stroke="#ccc" stroke-width=".4"/><path d="M18 14h8M18 18h8M18 22h8M30 14h6M30 18h6M30 22h6" stroke="#999" stroke-width=".8"/><path d="M36 24c1 3 7 5 7 10a7.500 7.500 0 1 1-15 0c0-3 2-4 4-5z" fill="#ff7a2a"/><circle cx="36" cy="35" r="3.500" fill="#7b3fbd"/></svg></div>
  <div class="dk"><svg viewBox="0 0 46 46"><rect x="0" y="8" width="46" height="26" fill="#fafafa" stroke="#ccc" stroke-width=".4"/><path d="M2 12h42" stroke="#ddd" stroke-width="2"/><path d="M4 16h8M4 19h8M4 22h8M18 16h5M18 19h5M18 22h5M30 16h8M30 19h8M30 22h8" stroke="#aaa" stroke-width=".7"/><rect x="6" y="26" width="26" height="3" fill="#bcd6ee"/><circle cx="36" cy="34" r="7.500" fill="#1b5fc0"/><path d="M31 33l5-2 5 2-1 4-7 0z" fill="#fff"/></svg></div>
  <div class="dk"><svg viewBox="0 0 46 46"><rect x="0" y="8" width="46" height="26" fill="#23272c"/><path d="M3 13h7M3 16h7M3 19h7M15 14h14M15 17h18M15 20h12M15 23h16" stroke="#4f9a8a" stroke-width=".8"/><circle cx="37" cy="34" r="7.500" fill="#35b378" stroke="#dfe9e3" stroke-width=".8"/><circle cx="37" cy="34" r="3.500" fill="none" stroke="#eef6f0" stroke-width=".7"/></svg></div>
  <div class="dk"><svg viewBox="0 0 46 46"><rect x="0" y="8" width="46" height="26" fill="#fbfbfb" stroke="#ccc" stroke-width=".4"/><rect x="13" y="10" width="32" height="4" fill="#bcd6ee"/><path d="M2 12h8M2 16h8M2 20h8M15 18h28M15 22h28M15 26h28" stroke="#ccc" stroke-width=".7"/><g transform="rotate(-10 32 36)"><rect x="25" y="28" width="13" height="15" fill="#fdf8dc"/><rect x="25" y="28" width="13" height="3" fill="#f9d11f"/></g></svg></div>
  <div class="dk"><svg viewBox="0 0 46 46"><defs><linearGradient id="tr" x1="0" y1="0" x2="1" y2="0"><stop offset="0" stop-color="#e9ecee"/><stop offset=".5" stop-color="#fdfdfd"/><stop offset="1" stop-color="#cfd4d8"/></linearGradient></defs><path d="M6 9h34l-4 32c-.3 2-5 3.500-13 3.500S10.300 43 10 41z" fill="url(#tr)" stroke="#b8bdc1" stroke-width=".5"/><ellipse cx="23" cy="9" rx="17" ry="4.500" fill="#868b90"/><path d="M12 9l5-5 4 4 4-5 5 3 4 3-4 2H15z" fill="#d9d9d9"/><path d="M17 7l4 2-3 2zM27 6l3 3-4 1z" fill="#6f7f95"/></svg></div>
</div>
</body>
</html>
```

FILE: styles.css
```css
* { box-sizing: border-box; }
html, body { margin: 0; padding: 0; height: 100%; overflow: hidden; }
body {
  width: 1920px;
  height: 977px;
  display: flex;
  flex-direction: column;
  font-family: "Open Sans", sans-serif;
  font-size: 14px;
  color: #333;
  background-color: #1b3450;
  background-image:
    repeating-linear-gradient(172deg, rgba(255,255,255,.05) 0 1px, transparent 1px 5px),
    repeating-linear-gradient(4deg, rgba(0,0,0,.22) 0 2px, transparent 2px 7px);
}
.sprite { display: block; width: 0; height: 0; overflow: hidden; flex: none; }
ul { list-style: none; margin: 0; padding: 0; }

.window {
  width: 1920px;
  height: 905px;
  background: #fff;
  border-radius: 0 0 7px 7px;
  display: flex;
  flex-direction: column;
  overflow: hidden;
  flex: none;
}

/* header */
.topbar {
  height: 49px;
  flex: none;
  background: #2b3b4e;
  display: flex;
  align-items: flex-start;
  justify-content: space-between;
  padding: 0 6px 0 21px;
}
.brand { display: flex; align-items: center; height: 54px; }
.logo { width: 30px; height: 20px; fill: #fff; margin-right: 10px; }
.brand-name { color: #fff; font-size: 18px; }
.search { display: flex; align-items: flex-start; padding-top: 10px; color: #fff; }
.search-label { width: 47px; height: 30px; line-height: 28px; font-size: 14px; }
.search-select {
  width: 140px; height: 30px; margin: 0; padding: 0 0 0 11px;
  font: 12px "Open Sans", sans-serif; color: #555;
  background: #fff; border: 1px solid #ccc; border-radius: 3px;
}
.search-for { width: 26px; height: 30px; line-height: 28px; padding-left: 3px; font-size: 14px; }
.search-input { width: 149px; height: 30px; margin: 0; border: 1px solid #ccc; border-radius: 3px; background: #fff; }
.btn-go {
  width: 38px; height: 30px; margin: 0 13px 0 4px; padding: 0;
  background: #428bca; color: #fff; border: 1px solid #357ebd; border-radius: 2px;
  font: 12px "Open Sans", sans-serif;
}
.btn-settings {
  width: 82px; height: 30px; padding: 0;
  background: #fff; color: #333; border: 1px solid #ccc; border-radius: 2px;
  font: 12px "Open Sans", sans-serif;
  display: flex; align-items: center; justify-content: center;
}
.ic-s { width: 12px; height: 12px; fill: currentColor; margin-right: 3px; }

/* toolbar */
.toolbar {
  height: 35px;
  flex: none;
  background: #e8e8e8;
  border-bottom: 1px solid #ccc;
  display: flex;
  align-items: center;
  padding-left: 12px;
}
.tool { display: flex; align-items: center; white-space: nowrap; color: #333; line-height: 34px; }
.tool.off { color: #aaa; }
.ic { width: 14px; height: 14px; fill: currentColor; margin-right: 3px; flex: none; }
.t-file .ic { margin-right: 4px; }
.t-file, .t-folder { margin-right: 25px; }
.t-copy { margin-right: 28px; }
.t-move { margin-right: 26px; }
.t-upload { margin-right: 28px; }
.t-download { margin-right: 25px; }
.t-delete { margin-right: 26px; }
.t-restore { margin-right: 13px; }
.t-rename { margin-right: 24px; }
.t-edit, .t-html, .t-perm { margin-right: 28px; }
.t-view { margin-right: 15px; }
.t-extract { margin-right: 26px; }
.vsep { width: 0; height: 34px; border-left: 1px dotted #bbb; margin-right: 17px; flex: none; }
.compress { position: relative; }
.compress::after {
  content: "";
  position: absolute;
  left: -10px; right: -18px; top: 1px; bottom: -8px;
  border: 5px solid #ff2a00;
  pointer-events: none;
}

/* main */
.main { flex: 1; display: flex; min-height: 0; }
.side { width: 336px; flex: none; display: flex; align-items: flex-start; height: 754px; }
.side-body { width: 316px; height: 754px; overflow: hidden; padding: 5px 11px 0 10px; }
.pathbar { display: flex; height: 34px; border: 1px solid #ccc; border-radius: 2px; background: #fff; }
.path-home { width: 41px; background: #eee; border-right: 1px solid #ccc; display: flex; align-items: center; justify-content: center; color: #555; }
.ic-home { width: 15px; height: 15px; fill: currentColor; }
.path-input { flex: 1; padding-left: 13px; line-height: 32px; color: #555; }
.path-go { width: 45px; text-align: center; line-height: 30px; border-left: 1px solid #ccc; }
.collapse { height: 34px; margin-top: 5px; line-height: 32px; text-align: center; border: 1px solid #ccc; border-radius: 2px; }
.tree { margin-top: 10px; }
.node { height: 22px; line-height: 22px; padding-left: 27px; display: flex; align-items: center; white-space: nowrap; }
.leaf { padding-left: 39px; }
.root { padding-left: 10px; }
.current { font-weight: 700; }
.tg { width: 11px; height: 11px; margin-right: 1px; fill: #333; flex: none; }
.minus { width: 9px; height: 2.500px; background: #333; margin-right: 3px; flex: none; }
.f { width: 15px; height: 12px; fill: #f0ad4e; margin-right: 4px; flex: none; }
.f-open { width: 16px; height: 13px; fill: #f0ad4e; margin-right: 2px; flex: none; }
.root-home { width: 15px; height: 15px; fill: #333; margin-right: 5px; flex: none; }
.scrollbar { width: 13px; height: 754px; background: #fafafa; border: solid #ececec; border-width: 0 1px; padding: 3px 2px 0; flex: none; }
.thumb { height: 673px; background: #c1c1c1; border-radius: 1px; }

.content { flex: 1; padding-top: 5px; padding-right: 6px; min-width: 0; display: flex; flex-direction: column; height: 764px; }
.actions {
  height: 35px; flex: none;
  border: 1px solid #ccc;
  display: flex; align-items: center;
  padding-left: 13px;
  color: #428bca;
}
.act { display: flex; align-items: center; white-space: nowrap; margin-right: 26px; }
.act.off { color: #999; }
.act .ic { width: 15px; height: 15px; margin-right: 3px; }
.a-home { margin-right: 24px; }
.a-up { margin-right: 24px; }
.a-up .ic { margin-right: 1px; }
.a-back .ic { margin-right: 2px; }
.a-forward { margin-right: 24px; }
.a-forward .ic { margin-right: 1px; }
.a-reload, .a-select { margin-right: 25px; }
.a-unselect { margin-right: 11px; }
.a-empty .ic { margin-right: 2px; }
.vsep-act { margin-right: 14px; }
.listing { flex: 1; margin-top: 6px; border: 1px solid #ccc; border-left: 0; border-bottom-color: #999; box-shadow: -1px 0 0 #ccc; }
.files { width: 100%; table-layout: fixed; border-collapse: separate; border-spacing: 0; font-family: "Liberation Sans", Arial, sans-serif; font-size: 14px; }
.c-icon { width: 40px; }
.c-size { width: 100px; }
.c-mod { width: 201px; }
.c-type { width: 181px; }
.c-perm { width: 96px; }
.files th {
  height: 35px; padding: 0; text-align: left; font-weight: 400;
  color: #428bca; background: #f2f2f2;
  border-bottom: 1px solid #ccc;
}
.files td {
  height: 31px; padding: 0 0 0 1px; white-space: nowrap; overflow: hidden;
  background: #d6ebfa; color: #333;
  border-bottom: 1px solid #ddd;
}
.files td:nth-child(2) { padding-left: 0; }
.files td.cell-ic { border-left: 2px solid #1a9ad6; padding: 0 0 0 3px; vertical-align: middle; }
.cell-ic svg { display: block; }
.k-folder { width: 20px; height: 15px; fill: #f0ad4e; }
.k-doc { width: 15px; height: 20px; fill: #7c5fa0; color: #7c5fa0; }
.k-zip { width: 15px; height: 20px; fill: #6a4420; color: #6a4420; }
.k-code { width: 15px; height: 20px; fill: #4f6a8f; color: #4f6a8f; }
.k-image { width: 15px; height: 20px; fill: #1aa58c; color: #1aa58c; }

/* download shelf */
.downloads {
  height: 57px; flex: none;
  margin-top: 0;
  border-top: 1px solid #dcdcdc;
  background: linear-gradient(#fff 40%, #f3f3f3);
  display: flex;
  align-items: stretch;
  padding: 7px 0 6px 4px;
}
.dl-item { width: 233px; flex: none; display: flex; align-items: center; border-right: 1px solid #ccc; padding-left: 19px; }
.dl-ic { width: 11px; height: 16px; margin-right: 15px; flex: none; }
.pg { fill: #f7f7f7; stroke: #bbb; stroke-width: 1; }
.pgf { fill: #ddd; stroke: #bbb; stroke-width: .6; }
.dl-text { flex: 1; min-width: 0; font-family: "Liberation Sans", sans-serif; color: #444; }
.dl-name { font-size: 13px; letter-spacing: .45px; line-height: 16px; white-space: nowrap; }
.dl-sub { font-size: 11px; letter-spacing: .2px; line-height: 14px; margin-top: 4px; color: #444; }
.dl-chev { width: 11px; height: 8px; margin-right: 18px; color: #777; flex: none; }
.dl-spacer { flex: 1; }
.show-all {
  width: 82px; height: 32px; padding: 0; align-self: center; margin: -3px 0 0;
  background: #fff; color: #1a73e8; border: 1px solid #d8d8d8; border-radius: 3px;
  font: 12px "Liberation Sans", sans-serif; letter-spacing: .3px;
}
.dl-close { width: 12px; height: 12px; align-self: center; margin: 0 12px 0 12px; fill: none; stroke: #666; stroke-width: 2; flex: none; }

/* dock */
.dock {
  width: 1836px;
  height: 64px;
  margin: 8px 0 0 42px;
  flex: none;
  background: #4a6279;
  border-radius: 6px 6px 0 0;
  display: flex;
  align-items: flex-start;
  padding: 7px 0 0 4.5px;
}
.dk { width: 52.3px; flex: none; display: flex; flex-direction: column; align-items: center; }
.dk svg { width: 46px; height: 46px; display: block; flex: none; overflow: visible; }
.run::after { content: ""; width: 4px; height: 4px; margin-top: 4px; background: #0b0b0b; border-radius: 50%; }
.dk-sep { width: 1px; height: 50px; margin: 1px 12px 0 11px; background: #1f2e3d; flex: none; }
.cal-m { font: 700 6px "Liberation Sans", sans-serif; fill: #fff; text-anchor: middle; }
.cal-d { font: 400 22px "Liberation Sans", sans-serif; fill: #222; text-anchor: middle; }
.badge { font: 700 10px "Liberation Sans", sans-serif; fill: #fff; text-anchor: middle; }
.exec { font: 700 6px "Liberation Mono", monospace; fill: #3cb043; }
```
